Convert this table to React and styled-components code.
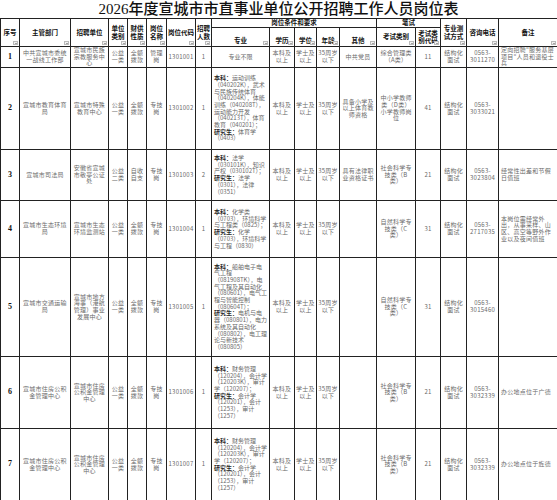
import React from 'react';
import styled, { createGlobalStyle } from 'styled-components';

const GlobalStyle = createGlobalStyle`
  body {
    margin: 0;
    background: #fff;
    font-family: "Noto Sans CJK SC", "Noto Sans", sans-serif;
  }
`;

const Page = styled.div`
  width: 557px;
  height: 500px;
  overflow: hidden;
`;

const Title = styled.h1`
  margin: 0;
  height: 18px;
  line-height: 18px;
  text-align: center;
  font-size: 15px;
  font-weight: 500;
  color: #111;
  font-family: "Liberation Serif", "Noto Sans CJK SC", serif;
`;

const Sheet = styled.table`
  width: 557px;
  border-collapse: collapse;
  table-layout: fixed;
`;

const HeadCell = styled.th`
  position: relative;
  height: ${(p) => p.$h || 8}px;
  padding: 0;
  border: 1px solid #222;
  font-size: 6.5px;
  line-height: 7.5px;
  font-weight: 700;
  color: #111;
  text-align: center;
  vertical-align: ${(p) => p.$valign || 'middle'};
  padding-bottom: ${(p) => (p.$valign === 'bottom' ? 2 : 0)}px;
`;

const FilterMark = styled.span`
  position: absolute;
  right: 1px;
  bottom: 1px;
  width: 5px;
  height: 4px;
  background: #f2f2f2;
  border: 1px solid #bbb;
  box-sizing: border-box;

  &::after {
    content: '';
    position: absolute;
    left: 0.5px;
    top: 0.5px;
    border-left: 1.5px solid transparent;
    border-right: 1.5px solid transparent;
    border-top: 1.5px solid #555;
  }
`;

const Cell = styled.td`
  height: ${(p) => p.$h}px;
  padding: 0 ${(p) => p.$pad ?? 1}px;
  border: 1px solid #222;
  font-size: 6px;
  letter-spacing: 0.25px;
  line-height: 6.7px;
  color: #6a6a6a;
  text-align: ${(p) => p.$align || 'center'};
  vertical-align: middle;
  white-space: ${(p) => (p.$nowrap ? 'nowrap' : 'normal')};
`;

const MajorCell = styled(Cell)`
  padding: 0 2px;
  letter-spacing: 0;
`;

const RowNo = styled(Cell)`
  font-family: "Liberation Serif", serif;
  font-size: 8px;
  font-weight: 700;
  color: #111;
  letter-spacing: 0;
`;

const Strong = styled.b`
  color: #2a2a2a;
  font-weight: 700;
`;

const widths = [19, 51, 38, 19, 19, 20, 29, 16, 58, 25, 22, 23, 37, 39, 25, 26, 32, 59];

const Head = ({ children, ...rest }) => (
  <HeadCell {...rest}>
    {children}
    <FilterMark />
  </HeadCell>
);

const finance = (
  <>
    <Strong>本科：</Strong>财务管理（120204），会计学（120203K），审计学（120207）；
    <br />
    <Strong>研究生：</Strong>会计学（120201），会计（1253），审计（1257）
  </>
);

const rows = [
  {
    h: 19, dept: '中共宣城市委统一战线工作部', unit: '宣城市民族宗教服务中心', kind: '公益一类', fund: '全额拨款',
    post: '管理岗', code: '1301001', num: '1', major: '专业不限', majorCenter: true,
    other: '中共党员', exam: '综合管理类（A类）', examCode: '11', phone: ['0563-', '3011270'],
    note: '定向招聘"服务基层项目"人员和退役士兵',
  },
  {
    h: 81, dept: '宣城市教育体育局', unit: '宣城市特殊教育中心', kind: '公益一类', fund: '全额拨款',
    post: '专技岗', code: '1301002', num: '1',
    major: (
      <>
        <Strong>本科：</Strong>运动训练（040202K），武术与民族传统体育（040204K），体能训练（040208T），运动能力开发（040213T），体育教育（040201）；
        <br />
        <Strong>研究生：</Strong>体育学（0403）
      </>
    ),
    other: '具备小学及以上体育教师资格', exam: '中小学教师类（D类）小学教师岗位', examCode: '41',
    phone: ['0563-', '3033021'], note: '',
  },
  {
    h: 50, dept: '宣城市司法局', unit: '安徽省宣城市敬亭公证处', kind: '公益二类', fund: '自收自支',
    post: '专技岗', code: '1301003', num: '2',
    major: (
      <>
        <Strong>本科：</Strong>法学（030101K），知识产权（030102T）；
        <br />
        <Strong>研究生：</Strong>法学（0301），法律（0351）
      </>
    ),
    other: '具有法律职业资格证书', exam: '社会科学专技类（B类）', examCode: '21',
    phone: ['0563-', '3023804'], note: '经常性出差和节假日值班',
  },
  {
    h: 56, dept: '宣城市生态环境局', unit: '宣城市生态环境监测站', kind: '公益一类', fund: '全额拨款',
    post: '专技岗', code: '1301004', num: '1',
    major: (
      <>
        <Strong>本科：</Strong>化学类（0703），环境科学与工程类（0825）；
        <br />
        <Strong>研究生：</Strong>化学（0703），环境科学与工程（0830）
      </>
    ),
    other: '', exam: '自然科学专技类（C类）', examCode: '31',
    phone: ['0563-', '2717035'], note: '本岗位需经常外出，从事采样、山区、高空等野外作业以及夜间值班',
  },
  {
    h: 98, dept: '宣城市交通运输局', unit: '宣城市地方海事（港航管理）事业发展中心', kind: '公益一类', fund: '全额拨款',
    post: '专技岗', code: '1301005', num: '1',
    major: (
      <>
        <Strong>本科：</Strong>船舶电子电气工程（081908TK），电气工程及其自动化（080601），电气工程与智能控制（080604T）；
        <br />
        <Strong>研究生：</Strong>电机与电器（080801），电力系统及其自动化（080802），电工理论与新技术（080805）
      </>
    ),
    other: '', exam: '自然科学专技类（C类）', examCode: '31',
    phone: ['0563-', '3015460'], note: '',
  },
  {
    h: 71, dept: '宣城市住房公积金管理中心', unit: '宣城市住房公积金管理中心', kind: '公益一类', fund: '全额拨款',
    post: '专技岗', code: '1301006', num: '1', major: finance,
    other: '', exam: '社会科学专技类（B类）', examCode: '21',
    phone: ['0563-', '3032339'], note: '办公地点位于广德',
  },
  {
    h: 71, dept: '宣城市住房公积金管理中心', unit: '宣城市住房公积金管理中心', kind: '公益一类', fund: '全额拨款',
    post: '专技岗', code: '1301007', num: '1', major: finance,
    other: '', exam: '社会科学专技类（B类）', examCode: '21',
    phone: ['0563-', '3032339'], note: '办公地点位于旌德',
  },
];

export default function App() {
  return (
    <Page>
      <GlobalStyle />
      <Title>2026年度宣城市市直事业单位公开招聘工作人员岗位表</Title>
      <Sheet>
        <colgroup>
          {widths.map((w, i) => (
            <col key={i} style={{ width: w }} />
          ))}
        </colgroup>
        <thead>
          <tr>
            <Head rowSpan={2}>序号</Head>
            <Head rowSpan={2}>主管部门</Head>
            <Head rowSpan={2}>招聘单位</Head>
            <Head rowSpan={2}>单位类别</Head>
            <Head rowSpan={2}>财供性质</Head>
            <Head rowSpan={2}>岗位名称</Head>
            <Head rowSpan={2}>岗位代码</Head>
            <Head rowSpan={2}>招聘人数</Head>
            <HeadCell colSpan={5} $h={8}>岗位条件和要求</HeadCell>
            <HeadCell colSpan={2} $h={8}>笔试</HeadCell>
            <Head rowSpan={2}>专业测试方式</Head>
            <Head rowSpan={2}>咨询电话</Head>
            <Head rowSpan={2}>备注</Head>
          </tr>
          <tr>
            <Head $h={16} $valign="bottom">专业</Head>
            <Head $h={16} $valign="bottom">学历</Head>
            <Head $h={16} $valign="bottom">学位</Head>
            <Head $h={16} $valign="bottom">年龄</Head>
            <Head $h={16} $valign="bottom">其他</Head>
            <Head $h={16}>考试类别</Head>
            <Head $h={16}>考试类别代码</Head>
          </tr>
        </thead>
        <tbody>
          {rows.map((r, i) => (
            <tr key={r.code}>
              <RowNo $h={r.h}>{i + 1}</RowNo>
              <Cell $h={r.h} $pad={3}>{r.dept}</Cell>
              <Cell $h={r.h} $pad={2}>{r.unit}</Cell>
              <Cell $h={r.h}>{r.kind}</Cell>
              <Cell $h={r.h}>{r.fund}</Cell>
              <Cell $h={r.h} $pad={2}>{r.post}</Cell>
              <Cell $h={r.h} $pad={0} $nowrap>{r.code}</Cell>
              <Cell $h={r.h}>{r.num}</Cell>
              <MajorCell $h={r.h} $align={r.majorCenter ? 'center' : 'left'}>{r.major}</MajorCell>
              <Cell $h={r.h} $pad={1}>本科及以上</Cell>
              <Cell $h={r.h} $pad={1}>学士及以上</Cell>
              <Cell $h={r.h} $pad={1}>35周岁以下</Cell>
              <Cell $h={r.h} $pad={2}>{r.other}</Cell>
              <Cell $h={r.h} $pad={3}>{r.exam}</Cell>
              <Cell $h={r.h}>{r.examCode}</Cell>
              <Cell $h={r.h} $pad={3}>结构化面试</Cell>
              <Cell $h={r.h}>
                {r.phone[0]}
                <br />
                {r.phone[1]}
              </Cell>
              <Cell $h={r.h} $pad={2} $align="left">{r.note}</Cell>
            </tr>
          ))}
        </tbody>
      </Sheet>
    </Page>
  );
}
